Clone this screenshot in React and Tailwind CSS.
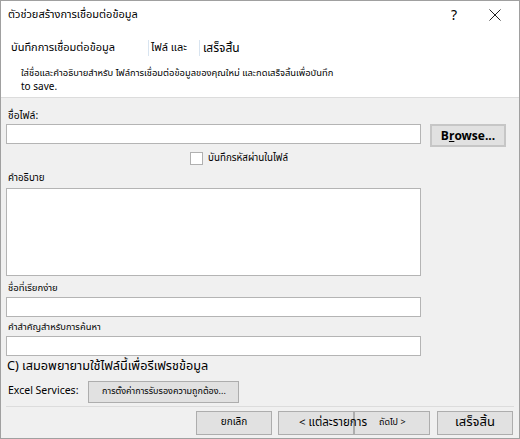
const font = { fontFamily: 'Tahoma, "Segoe UI", "Noto Sans Thai", "Liberation Sans", sans-serif' };

const Btn = ({ children, className = '' }) => (
  <div
    className={`flex items-center justify-center whitespace-nowrap border border-[#adadad] bg-[#e1e1e1] text-black ${className}`}
  >
    {children}
  </div>
);

const Field = ({ className = '' }) => (
  <div className={`w-[415px] border border-[#b4b4b4] bg-white ${className}`} />
);

export default function App() {
  return (
    <div
      style={font}
      className="flex h-[439px] w-[520px] flex-col overflow-hidden border border-[#a0a0a0] bg-[#f0f0f0] text-black"
    >
      {/* header */}
      <div className="h-[97px] shrink-0 border-b border-[#dcdcdc] bg-white">
        <div className="flex h-[29px] items-center pl-[7px] pr-[18px]">
          <span className="text-[11px]">ตัวช่วยสร้างการเชื่อมต่อข้อมูล</span>
          <span className="ml-auto mr-[32px] text-[14px]">?</span>
          <svg width="12" height="12" viewBox="0 0 12 12" className="mb-[2px]">
            <path d="M0.5 0.5 L11.5 11.5 M11.5 0.5 L0.5 11.5" stroke="#222" strokeWidth="1" />
          </svg>
        </div>
        <div className="mt-[10px] flex items-center pl-[10px] text-[11px] leading-[16px]">
          <span>บันทึกการเชื่อมต่อข้อมูล</span>
          <span className="ml-[33px] border-l border-[#d8e4f0] pl-[2px]">ไฟล์ และ</span>
          <span className="ml-[12px] border-l border-[#d8e4f0] pl-[3px] text-[12px]">เสร็จสิ้น</span>
        </div>
        <div className="mt-[10px] pl-[20px] text-[9.4px] leading-[14px]">
          <div>ใส่ชื่อและคำอธิบายสำหรับ ไฟล์การเชื่อมต่อข้อมูลของคุณใหม่ และกดเสร็จสิ้นเพื่อบันทึก</div>
          <div className="text-[10px]">to save.</div>
        </div>
      </div>

      {/* body */}
      <div className="flex flex-1 flex-col px-[5px]">
        <div className="mt-[10px] pl-[2px] text-[10.3px] leading-[16px]">ชื่อไฟล์:</div>
        <div className="flex items-start">
          <Field className="h-[20px]" />
          <Btn className="ml-[9px] h-[23px] w-[76px] border-2 border-[#c6c6c6] text-[12px] font-bold">
            B<span className="underline">r</span>owse...
          </Btn>
        </div>
        <div className="mt-[4px] flex items-center pl-[184px]">
          <div className="h-[13px] w-[13px] border border-[#b0b0b0] bg-white" />
          <span className="ml-[5px] text-[9.8px]">บันทึกรหัสผ่านในไฟล์</span>
        </div>
        <div className="mt-[5px] pl-[2px] text-[9.8px] leading-[14px]">คำอธิบาย</div>
        <Field className="mt-[3px] h-[88px]" />
        <div className="mt-[5px] pl-[2px] text-[9.5px] leading-[14px]">ชื่อที่เรียกง่าย</div>
        <Field className="mt-[2px] h-[20px]" />
        <div className="mt-[3px] pl-[2px] text-[9.4px] leading-[14px]">คำสำคัญสำหรับการค้นหา</div>
        <Field className="mt-[2px] h-[20px]" />
        <div className="mt-[1px] pl-[1px] text-[12.7px] leading-[20px]">
          C) เสมอพยายามใช้ไฟล์นี้เพื่อรีเฟรชข้อมูล
        </div>
        <div className="mt-[4px] flex items-center">
          <span className="pl-[2px] text-[10.5px]">Excel Services:</span>
          <Btn className="ml-[10px] h-[22px] w-[151px] text-[9px]">การตั้งค่าการรับรองความถูกต้อง...</Btn>
        </div>
        <div className="mt-[3px] border-t border-[#dcdcdc]" />
        <div className="mt-[4px] flex items-start pl-[190px]">
          <Btn className="h-[24px] w-[76px] text-[10px]">ยกเลิก</Btn>
          <Btn className="ml-[6px] h-[24px] w-[76px] justify-start overflow-visible pl-[20px] text-[11.5px]">
            <span className="relative z-10">&lt; แต่ละรายการ</span>
          </Btn>
          <Btn className="h-[24px] w-[76px] justify-start pl-[24px] text-[9px]">
            <span>ถัดไป &gt;</span>
          </Btn>
          <Btn className="ml-[7px] h-[24px] w-[76px] text-[13px]">เสร็จสิ้น</Btn>
        </div>
      </div>
    </div>
  );
}
